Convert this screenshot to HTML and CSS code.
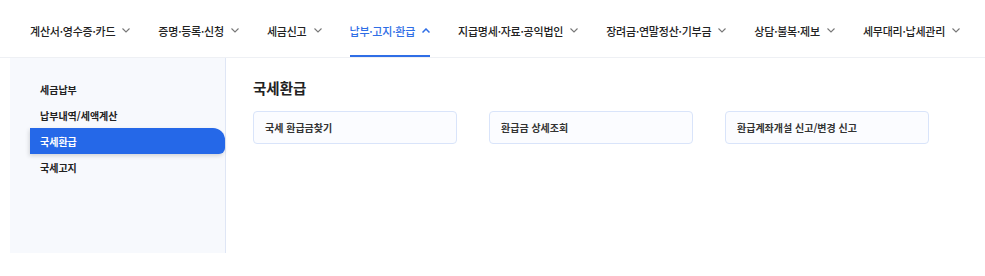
FILE: index.html
```html
<!DOCTYPE html>
<html lang="ko">
<head>
<meta charset="utf-8">
<link rel="stylesheet" href="styles.css">
</head>
<body>
<nav class="gnb">
  <a class="gnb-item">계산서·영수증·카드<svg class="chev" viewBox="0 0 8 5"><path d="M0.5 0.5 L4 4 L7.5 0.5"/></svg></a>
  <a class="gnb-item">증명·등록·신청<svg class="chev" viewBox="0 0 8 5"><path d="M0.5 0.5 L4 4 L7.5 0.5"/></svg></a>
  <a class="gnb-item">세금신고<svg class="chev" viewBox="0 0 8 5"><path d="M0.5 0.5 L4 4 L7.5 0.5"/></svg></a>
  <a class="gnb-item active">납부·고지·환급<svg class="chev up" viewBox="0 0 8 5"><path d="M0.5 4.5 L4 1 L7.5 4.5"/></svg></a>
  <a class="gnb-item">지급명세·자료·공익법인<svg class="chev" viewBox="0 0 8 5"><path d="M0.5 0.5 L4 4 L7.5 0.5"/></svg></a>
  <a class="gnb-item">장려금·연말정산·기부금<svg class="chev" viewBox="0 0 8 5"><path d="M0.5 0.5 L4 4 L7.5 0.5"/></svg></a>
  <a class="gnb-item">상담·불복·제보<svg class="chev" viewBox="0 0 8 5"><path d="M0.5 0.5 L4 4 L7.5 0.5"/></svg></a>
  <a class="gnb-item">세무대리·납세관리<svg class="chev" viewBox="0 0 8 5"><path d="M0.5 0.5 L4 4 L7.5 0.5"/></svg></a>
</nav>
<div class="panel">
  <aside class="side">
    <ul class="side-list">
      <li class="side-item">세금납부</li>
      <li class="side-item">납부내역/세액계산</li>
      <li class="side-item on">국세환급</li>
      <li class="side-item">국세고지</li>
    </ul>
  </aside>
  <main class="content">
    <h2 class="title">국세환급</h2>
    <div class="cards">
      <a class="card">국세 환급금찾기</a>
      <a class="card">환급금 상세조회</a>
      <a class="card">환급계좌개설 신고/변경 신고</a>
    </div>
  </main>
</div>
</body>
</html>
```
FILE: styles.css
```css
* { box-sizing: border-box; }
html, body { margin: 0; padding: 0; background: #fff; }
body {
  font-family: "Noto Sans CJK KR", "Noto Sans", sans-serif;
  color: #222;
  width: 985px;
  height: 276px;
  overflow: hidden;
}
.gnb {
  display: flex;
  align-items: stretch;
  height: 58px;
  padding-left: 30px;
  gap: 28px;
  border-bottom: 1px solid #eef0f4;
}
.gnb-item {
  display: flex;
  align-items: center;
  font-size: 11px;
  font-weight: 500;
  color: #222;
  letter-spacing: -0.22px;
  padding-top: 6px;
  border-bottom: 2px solid transparent;
  white-space: nowrap;
}
.gnb-item.active {
  color: #2f6ee6;
  border-bottom-color: #2f6ee6;
}
.chev {
  width: 8px;
  height: 5px;
  margin-left: 7px;
  fill: none;
  stroke: #777;
  stroke-width: 1.1;
}
.chev.up { stroke: #2f6ee6; stroke-width: 1.5; }
.panel {
  display: flex;
  height: 195px;
}
.side {
  margin-left: 10px;
  width: 216px;
  background: #f7f9fd;
  border-right: 1px solid #dfe6f5;
  padding-top: 18px;
}
.side-list {
  list-style: none;
  margin: 0;
  padding: 0 0 0 20px;
}
.side-item {
  height: 26px;
  display: flex;
  align-items: center;
  padding-left: 10px;
  font-size: 10px;
  font-weight: 700;
  color: #222;
}
.side-item.on {
  background: #2568e8;
  color: #fff;
  border-radius: 0 12px 6px 0;
  box-shadow: -1px 2px 4px rgba(0, 0, 0, 0.15);
}
.content {
  flex: 1;
  padding: 20px 0 0 27px;
}
.title {
  margin: 0;
  font-size: 14.5px;
  font-weight: 700;
  line-height: 20px;
  color: #222;
}
.cards {
  display: flex;
  gap: 32px;
  margin-top: 13px;
}
.card {
  width: 204px;
  height: 33px;
  display: flex;
  align-items: center;
  padding-left: 11px;
  background: #fbfcff;
  border: 1px solid #d9e4fa;
  border-radius: 4px;
  font-size: 10px;
  font-weight: 700;
  color: #333;
}
```
